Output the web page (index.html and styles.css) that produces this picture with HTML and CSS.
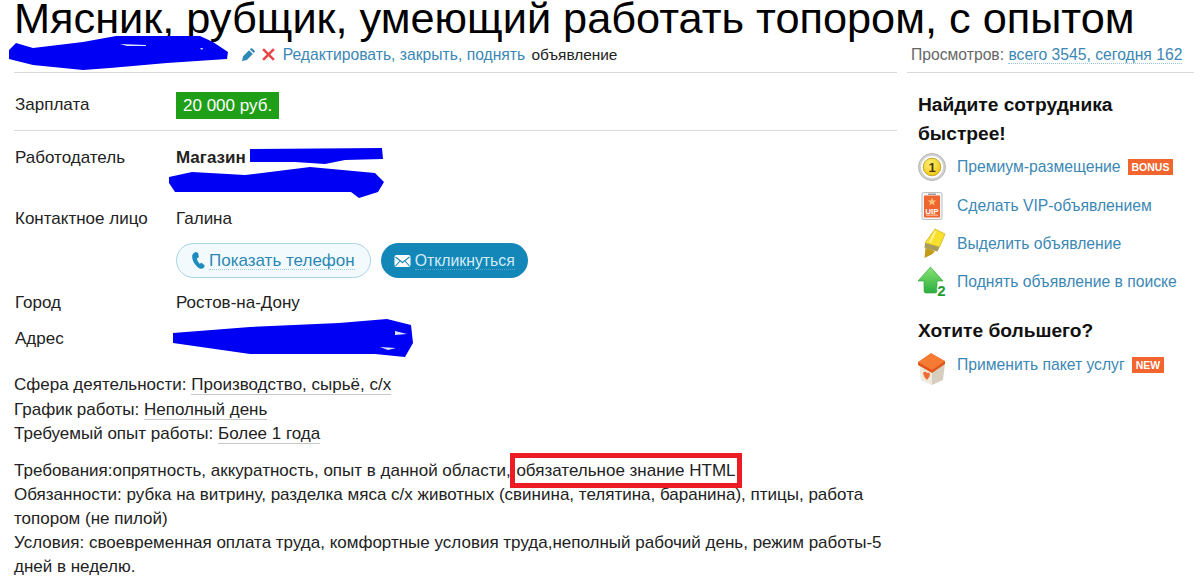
FILE: index.html
```html
<!DOCTYPE html>
<html>
<head>
    <title>Мясник, рубщик</title>
    <link rel="stylesheet" href="styles.css">
</head>
<body>
    <h1>Мясник, рубщик, умеющий работать топором, с опытом</h1>

    <svg class="scribble scribble-owner" viewBox="0 0 219 34"><path d="M0 14 L7 7 L24 12 L74 6 L107 0 L191 0 L204 6 L219 16 L218 23 L158 27 L101 32 L74 34 L24 29 L0 23 Z"/><path class="gap" d="M111 8 L137 9 L137 10 L118 10 Z M191 12 L194 12 L193 14 Z"/></svg>
    <svg class="scribble scribble-name" viewBox="0 0 133 16"><path d="M0 1 L132 0 L133 11 L95 12 L75 16 L45 14 L0 14 Z"/></svg>
    <svg class="scribble scribble-company" viewBox="0 0 215 31"><path d="M0 10 L23 5 L76 8 L141 0 L206 6 L215 15 L209 25 L190 31 L182 25 L6 25 L0 16 Z"/></svg>
    <svg class="scribble scribble-address" viewBox="0 0 242 38"><path d="M0 14 L77 8 L166 4 L214 0 L238 6 L240 24 L232 38 L202 35 L77 35 L0 24 Z"/><path class="gap" d="M222 12 L234 15 L222 16 Z M207 28 L223 29 L215 31 Z"/></svg>

    <div class="page">
        <div class="main">
            <div class="meta">
                <span class="tools">
                    <svg class="tool-icon" viewBox="0 0 12 12"><path d="M0 12 L1 7.5 L6.5 2 L10 5.5 L4.5 11 Z M7.3 1.2 L8 .5 Q8.8 0 9.6 .5 L11.5 2.4 Q12 3.2 11.5 4 L10.8 4.7 Z" fill="#2f88b6"/></svg>
                    <svg class="tool-icon" viewBox="0 0 12 12"><path d="M1 1 L11 11 M11 1 L1 11" stroke="#e8484a" stroke-width="2.4" fill="none"/></svg>
                </span>
                <a href="#">Редактировать, закрыть, поднять</a> <span class="meta-note">объявление</span>
            </div>

            <div class="row row-salary">
                <div class="label">Зарплата</div>
                <div class="value"><span class="salary">20 000 руб.</span></div>
            </div>

            <div class="row row-company">
                <div class="label">Работодатель</div>
                <div class="value"><b>Магазин</b></div>
            </div>

            <div class="row row-contact">
                <div class="label">Контактное лицо</div>
                <div class="value">Галина</div>
            </div>

            <div class="row row-buttons">
                <div class="label"></div>
                <div class="value buttons">
                    <a class="btn btn-phone" href="#">
                        <svg viewBox="0 0 12 16"><path d="M3 0 L5.6 .8 L6.4 5 L4.4 6 Q5 9 7 11 L9 10 L12 13 L10.5 15.4 Q8 16.6 5 14 Q0 9.5 0 4 Q0 1.5 3 0 Z" fill="#1d8cbc"/></svg>
                        <span>Показать телефон</span>
                    </a>
                    <a class="btn btn-reply" href="#">
                        <svg viewBox="0 0 16 12"><rect width="16" height="12" rx="2" fill="#fff"/><path d="M1 2 L8 7.5 L15 2 M1 11 L5.5 6 M15 11 L10.5 6" stroke="#1387b8" stroke-width="1.1" fill="none"/></svg>
                        <span>Откликнуться</span>
                    </a>
                </div>
            </div>

            <div class="row row-city">
                <div class="label">Город</div>
                <div class="value">Ростов-на-Дону</div>
            </div>

            <div class="row row-address">
                <div class="label">Адрес</div>
                <div class="value"></div>
            </div>

            <div class="facts">
                <div>Сфера деятельности: <span class="term">Производство, сырьё, с/х</span></div>
                <div>График работы: <span class="term">Неполный день</span></div>
                <div>Требуемый опыт работы: <span class="term">Более 1 года</span></div>
            </div>

            <div class="description">
                Требования:опрятность, аккуратность, опыт в данной области, <span class="marked">обязательное знание HTML</span><br>
                Обязанности: рубка на витрину, разделка мяса с/х животных (свинина, телятина, баранина), птицы, работа топором (не пилой)<br>
                Условия: своевременная оплата труда, комфортные условия труда,неполный рабочий день, режим работы-5 дней в неделю.
            </div>
        </div>

        <div class="side">
            <div class="views">Просмотров: <a href="#">всего 3545, сегодня 162</a></div>

            <div class="promo">
                <h2>Найдите сотрудника быстрее!</h2>
                <div class="promo-item">
                    <svg viewBox="0 0 28 28">
                        <defs>
                            <radialGradient id="medalFill" cx="0.4" cy="0.35" r="0.7"><stop offset="0" stop-color="#fff27a"/><stop offset="1" stop-color="#f2c40e"/></radialGradient>
                        </defs>
                        <circle cx="14" cy="14" r="13.5" fill="#d2d2d2" stroke="#b4b4b4"/>
                        <circle cx="14" cy="14" r="11" fill="#fff"/>
                        <circle cx="14" cy="14" r="8.8" fill="url(#medalFill)" stroke="#c2a62c"/>
                        <text x="14" y="18.5" class="medal-num">1</text>
                    </svg>
                    <a href="#">Премиум-размещение</a><span class="tag">BONUS</span>
                </div>
                <div class="promo-item">
                    <svg viewBox="0 0 28 28"><rect x="4" y="0.5" width="20" height="27" rx="1.5" fill="#f6f6f6" stroke="#bdbdbd"/><rect x="6" y="3.5" width="16" height="22" fill="#f0652f"/><rect x="10" y="1.6" width="8" height="1.2" fill="#8a8a8a"/><path d="M14 5.5 L15.2 8.4 L18.2 8.6 L15.9 10.5 L16.7 13.4 L14 11.8 L11.3 13.4 L12.1 10.5 L9.8 8.6 L12.8 8.4 Z" fill="#ffc27a"/><text x="14" y="21.5" class="vip-text">UIP</text><rect x="8" y="22.6" width="12" height="1" fill="#ffd2b8"/></svg>
                    <a href="#">Сделать VIP-объявлением</a>
                </div>
                <div class="promo-item">
                    <svg class="icon-marker" viewBox="0 0 28 30"><path d="M17 0 L27 5 L21.5 18 L7 14 Z" fill="#f9e02c" stroke="#cdb21f" stroke-width=".8" stroke-linejoin="round"/><path d="M17.5 2 L12 13.5" stroke="#fff28e" stroke-width="2" fill="none"/><path d="M7 14 L21.5 18 L19.5 22.5 L6.5 19 Z" fill="#a89c5a"/><path d="M7.5 19 L17 22 L14.5 25 L6.5 29 Z" fill="#c29c16"/></svg>
                    <a href="#">Выделить объявление</a>
                </div>
                <div class="promo-item">
                    <svg class="icon-arrow" viewBox="0 0 28 30">
                        <defs>
                            <linearGradient id="arrowFill" x1="0" y1="0" x2="0" y2="1"><stop offset="0" stop-color="#86e470"/><stop offset="1" stop-color="#2cae40"/></linearGradient>
                        </defs>
                        <path d="M12.5 0 L25 14 L19 14 L19 24 Q19 26 17 26 L8 26 Q6 26 6 24 L6 14 L0 14 Z" fill="url(#arrowFill)" stroke="#38a848" stroke-width=".7" stroke-linejoin="round"/>
                        <text x="23.5" y="29" class="arrow-num">2</text>
                    </svg>
                    <a href="#">Поднять объявление в поиске</a>
                </div>
            </div>

            <div class="promo promo-more">
                <h2>Хотите большего?</h2>
                <div class="promo-item">
                    <svg class="icon-box" viewBox="0 0 28 32"><path d="M1 10 L14 18 L14 32 L3 27 Z" fill="#efe9dc"/><path d="M27 10 L14 18 L14 32 L25 27 Z" fill="#d6cfbf"/><path d="M0 9 L0 12 L14 20 L27 11 L27 8 Z" fill="#e2561c"/><path d="M0 9 L13 0 L27 8 L14 17 Z" fill="#f57a34"/><path d="M5 20 Q7 17.5 9 20 Q11 18.5 12 21 Q12 24 9 27 Q5.5 24 5 20 Z" fill="#ef6a32"/></svg>
                    <a href="#">Применить пакет услуг</a><span class="tag">NEW</span>
                </div>
            </div>
        </div>
    </div>
</body>
</html>
```

FILE: styles.css
```css
html, body {
    height: 582px;
    overflow: hidden;
}
body {
    margin: 0;
    position: relative;
    background: #fff;
    color: #222;
    font-family: "Liberation Sans", Arial, sans-serif;
    font-size: 17px;
}
a {
    color: #3b87b5;
    text-decoration: none;
}
h1 {
    margin: -3px 0 3px;
    padding-left: 14px;
    font-size: 43.3px;
    font-weight: normal;
    line-height: 42px;
    color: #000;
    white-space: nowrap;
}
.page {
    display: flex;
    padding-left: 14px;
}
.main {
    width: 883px;
}
.side {
    margin-left: 10px;
    width: 287px;
}
.meta {
    height: 31px;
    padding-left: 228px;
    box-sizing: border-box;
    border-bottom: 1px solid #d9d9d9;
    font-size: 15.7px;
    line-height: 25px;
}
.meta-note {
    font-size: 15.4px;
    margin-left: 2px;
}
.tool-icon {
    width: 13px;
    height: 13px;
    vertical-align: -1px;
    margin-right: 3px;
}
.row {
    display: flex;
}
.label {
    width: 161px;
    padding-left: 1px;
    flex: none;
}
.row-salary {
    height: 58px;
    box-sizing: border-box;
    padding-top: 22px;
    border-bottom: 1px solid #d9d9d9;
    line-height: 20px;
}
.salary {
    display: inline-block;
    margin-top: -3px;
    padding: 0 7px;
    line-height: 27px;
    background: #1f9e18;
    color: #fff;
}
.row-company {
    padding-top: 17px;
    line-height: 20px;
    height: 61px;
}
.row-contact {
    line-height: 20px;
    height: 30px;
}
.row-buttons {
    height: 50px;
    padding-top: 4px;
}
.buttons {
    display: flex;
    gap: 10px;
}
.btn {
    display: flex;
    align-items: center;
    gap: 4px;
    height: 35px;
    box-sizing: border-box;
    padding: 0 15px;
    border-radius: 18px;
}
.btn span {
    border-bottom: 1px dotted rgba(120, 180, 210, 0.7);
    line-height: 17px;
}
.btn-phone {
    background: #f3fafd;
    border: 1px solid #a9d3e6;
    color: #2b88b6;
}
.btn-phone svg {
    width: 13px;
    height: 17px;
}
.btn-reply {
    background: #1387b8;
    color: #d3ecf6;
    padding: 0 13px;
    font-size: 15.8px;
}
.btn-reply svg {
    width: 17px;
    height: 12px;
}
.row-city {
    height: 36px;
    line-height: 20px;
}
.row-address {
    height: 44px;
    line-height: 20px;
}
.facts {
    line-height: 24.5px;
}
.term {
    border-bottom: 1px solid #c8c8c8;
}
.description {
    margin-top: 12px;
    line-height: 24px;
}
.marked {
    outline: 5px solid #ed1c24;
    padding: 3px 1px;
}
.views {
    height: 31px;
    box-sizing: border-box;
    border-bottom: 1px solid #d9d9d9;
    font-size: 15.7px;
    line-height: 25px;
    color: #666;
    padding-left: 4px;
}
.views a {
    border-bottom: 1px dotted #9cc3da;
}
.promo {
    padding-left: 11px;
    padding-top: 17px;
}
.promo-more {
    padding-top: 14px;
}
h2 {
    margin: 0;
    font-size: 19.2px;
    line-height: 29px;
    color: #111;
    width: 240px;
}
.promo-more h2 {
    margin-bottom: 1px;
}
.promo-item {
    display: flex;
    align-items: center;
    height: 38.4px;
    font-size: 15.7px;
}
.promo-item svg {
    width: 28px;
    height: 28px;
    margin-right: 11px;
    flex: none;
    overflow: visible;
}
.promo-item .icon-marker,
.promo-item .icon-arrow {
    height: 30px;
}
.promo-item .icon-box {
    height: 32px;
    margin-top: 8px;
}
.tag {
    margin-left: 7px;
    padding: 0 4px;
    background: #f2652f;
    color: #fff;
    font-size: 10.5px;
    font-weight: bold;
    line-height: 16px;
}
.medal-num {
    font: bold 13px "Liberation Sans", sans-serif;
    text-anchor: middle;
    fill: #4a3c00;
}
.vip-text {
    font: bold 8px "Liberation Sans", sans-serif;
    text-anchor: middle;
    fill: #fff;
}
.arrow-num {
    font: bold 15px "Liberation Sans", sans-serif;
    text-anchor: middle;
    fill: #1f9a2e;
    stroke: #fff;
    stroke-width: 2px;
    paint-order: stroke;
}
/* blue marker strokes over hidden details */
.scribble {
    position: absolute;
    fill: #0000f5;
}
.scribble .gap {
    fill: #dfe3ff;
}
.scribble-owner {
    left: 9px;
    top: 36px;
    width: 219px;
    height: 34px;
}
.scribble-name {
    left: 250px;
    top: 148px;
    width: 133px;
    height: 16px;
}
.scribble-company {
    left: 169px;
    top: 167px;
    width: 215px;
    height: 31px;
}
.scribble-address {
    left: 173px;
    top: 319px;
    width: 242px;
    height: 38px;
}
```
